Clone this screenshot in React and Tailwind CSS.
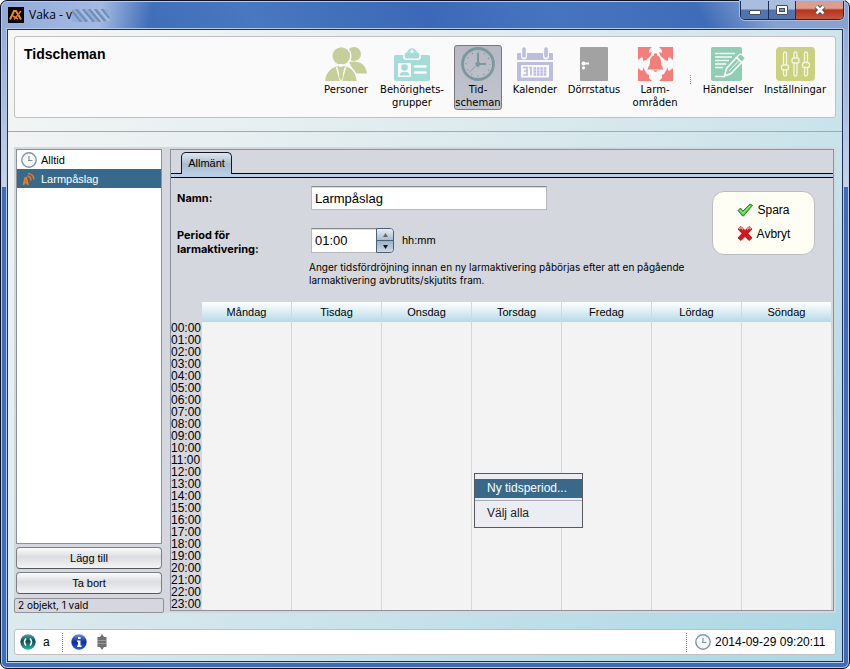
import React, { useState } from 'react';

const days = ['Måndag', 'Tisdag', 'Onsdag', 'Torsdag', 'Fredag', 'Lördag', 'Söndag'];
const hours = Array.from({ length: 24 }, (_, i) => `${String(i).padStart(2, '0')}:00`);

function PersonsIcon() {
  return (
    <svg width="42" height="34" viewBox="0 0 42 34" fill="#c6cf9a" className="shrink-0">
      <circle cx="29" cy="7" r="7" />
      <path d="M24 15C32 13 41 16 42 26.500H30Z" />
      <circle cx="16.300" cy="9" r="10.300" fill="#fafafa" />
      <circle cx="16.300" cy="9" r="8.800" />
      <path d="M-1 34C0 22 8 17 16 17C25 17 32 23 33.500 34Z" fill="#fafafa" />
      <path d="M0 34C1 25 7 20 14 19L16 21L18 19C26 20 31 25 31.500 34Z" />
      <path d="M11.500 20L15.500 34M20.500 20L16.500 34" stroke="#fafafa" strokeWidth="1.500" />
      <path d="M14 20H18L17 23L18 30L16 34L14 30L15 23Z" />
    </svg>
  );
}

function BadgeIcon() {
  return (
    <svg width="36" height="34" viewBox="0 0 36 34" fill="#a6dcd8" className="shrink-0">
      <rect y="8" width="36" height="26" rx="2" />
      <path d="M9 8V9Q9 13 12 13H24Q27 13 27 9V8Z" fill="#fafafa" />
      <path d="M10.500 8C11 5.500 13 5.500 13.500 4.500A4.700 4.700 0 0 1 22.500 4.500C23 5.500 25 5.500 25.500 8Q25.500 11.500 23 11.500H13Q10.500 11.500 10.500 8Z" />
      <circle cx="18" cy="4.500" r="1.700" fill="#fafafa" />
      <rect x="4" y="16" width="13" height="14" rx="1" fill="#fafafa" />
      <circle cx="10.500" cy="20.500" r="3.300" />
      <path d="M5.500 28.500C6 24.500 9 25 10.500 25S15 24.500 15.500 28.500Z" />
      <path d="M21 19.500H31.500M21 25.500H31.500" stroke="#fafafa" strokeWidth="2.600" strokeLinecap="round" />
    </svg>
  );
}

function BigClockIcon() {
  return (
    <svg width="34" height="34" viewBox="0 0 34 34" fill="none" stroke="#7d979f" className="shrink-0">
      <circle cx="17" cy="17" r="15.500" strokeWidth="2.800" />
      <circle cx="17" cy="17" r="12" strokeWidth="1.500" strokeDasharray="1 5.283" strokeDashoffset="0.500" />
      <path d="M17 17V6M17 17H25" strokeWidth="2" />
      <path d="M17 17L8 25.500" strokeWidth="0.800" />
      <path d="M17 13.500L20 17L17 20.500L14 17Z" fill="#7d979f" stroke="none" />
    </svg>
  );
}

function CalendarIcon() {
  return (
    <svg width="36" height="34" viewBox="0 0 36 34" fill="#bdbde0" className="shrink-0">
      <path d="M1 6H35Q36 6 36 7V13H0V7Q0 6 1 6Z" />
      <path d="M0 15H36V33Q36 34 35 34H1Q0 34 0 33Z" />
      <path d="M7 2V9.500M29 2V9.500" stroke="#fafafa" strokeWidth="6" strokeLinecap="round" />
      <path d="M7 2V9M29 2V9" stroke="#bdbde0" strokeWidth="3.600" strokeLinecap="round" />
      <rect x="4" y="18" width="28" height="12.500" fill="#fafafa" />
      <path d="M6 20.500H10V24H7M10 24V28H6M12 20.500H14V28.500" fill="none" stroke="#bdbde0" strokeWidth="1.700" />
      <path d="M16.500 21.500H29.500M16.500 24.500H29.500M16.500 27.500H29.500" stroke="#bdbde0" strokeWidth="2.300" strokeDasharray="2.600 0.800" />
    </svg>
  );
}

function DoorIcon() {
  return (
    <svg width="28" height="34" viewBox="0 0 28 34" className="shrink-0">
      <rect width="28" height="34" rx="1" fill="#a2a2a2" />
      <circle cx="3.500" cy="16.500" r="2" fill="#fff" />
      <rect x="3" y="15.500" width="6" height="2" fill="#fff" />
      <circle cx="3.500" cy="20.800" r="1.600" fill="#fff" />
    </svg>
  );
}

function AlarmIcon() {
  return (
    <svg width="35" height="34" viewBox="0 0 35 34" fill="#f57d7a" className="shrink-0">
      <path d="M0 0H14L11 3V6L14 5L12.500 9L8 13L5 14V10.500H3L0 13Z" />
      <path d="M35 0H21L24 3V6L21 5L22.500 9L27 13L30 14V10.500H32L35 13Z" />
      <path d="M0 34H14L11 31V28L14 29L9 27L6 22L5 20V23.500H3L0 21Z" />
      <path d="M35 34H21L24 31V28L21 29L26 27L29 22L30 20V23.500H32L35 21Z" />
      <circle cx="17.500" cy="8" r="1.800" />
      <path d="M17.500 8.500C22 8.500 23 12 23 15C23 19 25 20 25.500 22.500H9.500C10 20 12 19 12 15C12 12 13 8.500 17.500 8.500Z" />
      <path d="M15.500 23.300H19.500Q19 25 17.500 25T15.500 23.300Z" />
    </svg>
  );
}

function EventsIcon() {
  return (
    <svg width="34" height="34" viewBox="0 0 34 34" className="shrink-0">
      <rect width="31" height="34" rx="2" fill="#8fcdb5" />
      <path d="M4 6.500H24M4 10H21M4 13.500H18M4 17H15M4 20.500H12M4 29.500H14" stroke="#fafafa" strokeWidth="1.600" />
      <path d="M25.500 10.500L28.500 7.500Q30 6.500 31.500 8L33.500 10Q34.500 11.500 33.500 12.500L30.500 15.500Z" fill="#8fcdb5" stroke="#fafafa" strokeWidth="1.200" />
      <path d="M15.500 21.500L25.500 10.500L30.500 15.500L20 26.500L13.500 29Z" fill="#8fcdb5" stroke="#fafafa" strokeWidth="1.700" />
      <path d="M18 24L28 13.500" stroke="#fafafa" strokeWidth="1" />
    </svg>
  );
}

function SettingsIcon() {
  return (
    <svg width="39" height="34" viewBox="0 0 39 34" className="shrink-0">
      <rect width="39" height="34" rx="4" fill="#cad27f" />
      <g fill="#cad27f" stroke="#f4f6e2" strokeWidth="1.300">
        <rect x="7.500" y="5" width="3" height="24" rx="1.500" />
        <rect x="18" y="5" width="3" height="24" rx="1.500" />
        <rect x="28.500" y="5" width="3" height="24" rx="1.500" />
        <rect x="5.500" y="18" width="7" height="5" rx="2" />
        <rect x="16" y="11" width="7" height="5" rx="2" />
        <rect x="26.500" y="15.500" width="7" height="5" rx="2" />
      </g>
    </svg>
  );
}

function SmallClock() {
  return (
    <svg width="16" height="16" viewBox="0 0 16 16" fill="none" className="shrink-0">
      <circle cx="8" cy="8" r="7.200" fill="#fbfcfc" stroke="#8297a0" strokeWidth="1.400" />
      <circle cx="8" cy="8" r="5.300" stroke="#c3cfd4" strokeWidth="0.800" strokeDasharray="0.700 2.075" />
      <path d="M8 4V9M7 8.500H11.500" stroke="#8297a0" strokeWidth="1.200" />
    </svg>
  );
}

function SignalIcon() {
  return (
    <svg width="16" height="16" viewBox="0 0 16 16" fill="none" stroke="#ea7a1b" className="shrink-0">
      <path d="M2.500 14L4.200 7H5.300L7 14M3 11.500H6.500" strokeWidth="1.800" />
      <path d="M6.500 5Q10 5.500 10 9.500M7 2.500Q12.800 3 12.800 8.500" strokeWidth="1.500" />
    </svg>
  );
}

const tools = [
  { icon: PersonsIcon, lines: ['Personer'], width: 'w-12' },
  { icon: BadgeIcon, lines: ['Behörighets-', 'grupper'], width: 'w-[66px]' },
  { icon: BigClockIcon, lines: ['Tid-', 'scheman'], width: 'w-12', active: true },
  { icon: CalendarIcon, lines: ['Kalender'], width: 'w-12' },
  { icon: DoorIcon, lines: ['Dörrstatus'], width: 'w-[52px]' },
  { icon: AlarmIcon, lines: ['Larm-', 'områden'], width: 'w-[52px]' },
  null,
  { icon: EventsIcon, lines: ['Händelser'], width: 'w-[56px]' },
  { icon: SettingsIcon, lines: ['Inställningar'], width: 'w-[60px]' },
];

function ToolButton({ icon: Icon, lines, width, active }) {
  return (
    <button
      className={`${width} flex h-[65px] flex-col items-center rounded-[3px] border pt-px font-['DejaVu_Sans',sans-serif] text-[10px] leading-[13px] whitespace-nowrap ${
        active ? 'border-[#77797d] bg-linear-to-b from-[#b6b9c3] to-[#c3c5ce]' : 'border-transparent'
      }`}
    >
      <Icon />
      <span className="mt-[2px] flex flex-col items-center">
        {lines.map(l => <span key={l}>{l}</span>)}
      </span>
    </button>
  );
}

function TitleBar() {
  return (
    <header className="flex h-[27px] justify-between pl-[7px]">
      <div className="flex items-center gap-[5px] pt-px">
        <svg width="16" height="16" viewBox="0 0 16 16" fill="none">
          <rect width="16" height="16" fill="#000" />
          <path d="M2 12.500L6 4H8L13 12.500" stroke="#f58a1c" strokeWidth="2" />
          <path d="M13 4L6 12.500M5 9L10 12" stroke="#ee7711" strokeWidth="1.600" />
        </svg>
        <h1 className="flex items-center font-['Open_Sans',sans-serif] text-[12px] leading-4">
          <span>Vaka - v</span>
          <svg width="39" height="13" viewBox="0 0 39 13">
            <rect width="39" height="13" fill="#91add9" />
            <path d="M0 2L9 13M4 0L15 13M11 0L22 13M17 0L28 13M23 0L33 12M30 0L37 9" stroke="#5f779f" strokeWidth="2" opacity="0.600" />
            <path d="M8 0L19 13M20 0L31 13M27 0L37 12" stroke="#c5d3e8" strokeWidth="1.500" opacity="0.500" />
          </svg>
        </h1>
      </div>
      <div className="mr-[5px] flex h-[19px] overflow-hidden rounded-b-[5px] border border-t-0 border-[#1b2c55] shadow-[0_0_0_1px_#a9bde0]">
        <button aria-label="Minimera" className="flex w-7 items-center justify-center border-r border-[#1b2c55] bg-linear-to-b from-[#a9bddf] from-45% to-[#5273ab] to-50%">
          <span className="mt-[5px] h-[5px] w-3 rounded-[1px] border border-[#474d5d] bg-white" />
        </button>
        <button aria-label="Maximera" className="flex w-[27px] items-center justify-center border-r border-[#1b2c55] bg-linear-to-b from-[#a9bddf] from-45% to-[#5273ab] to-50%">
          <span className="flex h-[10px] w-3 items-center justify-center rounded-[1px] border border-[#474d5d] bg-white">
            <span className="h-1 w-[6px] border border-[#474d5d] bg-[#7b95c3]" />
          </span>
        </button>
        <button aria-label="Stäng" className="flex w-[47px] items-center justify-center bg-linear-to-b from-[#dc9d91] from-40% via-[#b5331c] via-50% to-[#c8553b]">
          <svg width="12" height="10" viewBox="0 0 12 10" fill="none">
            <path d="M2.500 1.500L9.500 8.500M9.500 1.500L2.500 8.500" stroke="#4c4a58" strokeWidth="4.500" />
            <path d="M2.500 1.500L9.500 8.500M9.500 1.500L2.500 8.500" stroke="#fff" strokeWidth="2.600" />
          </svg>
        </button>
      </div>
    </header>
  );
}

function Toolbar() {
  return (
    <div className="mx-[6px] mt-[6px] flex h-[82px] justify-between rounded-[3px] border border-[#c0bfc1] bg-[#fafafa] pr-[10px]">
      <h2 className="pt-[9px] pl-[9px] text-[14px] leading-4 font-bold">Tidscheman</h2>
      <nav className="flex gap-[9px] pt-2">
        {tools.map((tool, i) =>
          tool ? <ToolButton key={i} {...tool} /> : (
            <span key={i} className="mt-[30px] h-[9px] w-px border-l border-dotted border-[#8a8a8a]" />
          )
        )}
      </nav>
    </div>
  );
}

function Sidebar({ selected, onSelect }) {
  const items = [
    { name: 'Alltid', icon: SmallClock },
    { name: 'Larmpåslag', icon: SignalIcon },
  ];
  const btn = 'h-[22px] rounded-[4px] border border-[#7c7f85] border-b-[#55585e] bg-linear-to-b from-[#fbfbfc] via-[#dcdde0] via-45% to-[#f4f4f6] text-center leading-4';
  return (
    <aside className="flex w-[150px] shrink-0 flex-col text-[11px]">
      <ul className="mt-[2px] mr-[2px] ml-[2px] flex-1 border border-[#8d919b] bg-white">
        {items.map(({ name, icon: Icon }) => (
          <li key={name}>
            <button
              onClick={() => onSelect(name)}
              className={`flex h-[19px] w-full items-center gap-1 pt-px pl-1 ${selected === name ? 'bg-[#39698a] text-white' : ''}`}
            >
              <Icon />
              {name}
            </button>
          </li>
        ))}
      </ul>
      <div className="mt-[3px] mr-[2px] ml-[2px] flex flex-col gap-[3px]">
        <button className={btn}>Lägg till</button>
        <button className={btn}>Ta bort</button>
      </div>
      <p className="mt-1 h-[15px] rounded-[2px] border border-[#909298] pl-[3px] font-['Inter',sans-serif] text-[10px] leading-[13px]">2 objekt, 1 vald</p>
    </aside>
  );
}

function ScheduleForm() {
  const field = 'border border-[#b9b9bb] border-t-[#88898c] bg-white px-[3px] text-[13px] shadow-[inset_0_1px_0_#dcdcdc] outline-none';
  const label = "font-['Inter',sans-serif] text-[11px] leading-[14px] font-bold";
  return (
    <form className="flex h-[124px] justify-between pt-2 pr-[18px] pl-[6px]" onSubmit={e => e.preventDefault()}>
      <div className="grid grid-cols-[132px_1fr] content-start gap-y-[18px]">
        <label htmlFor="name" className={`${label} self-center`}>Namn:</label>
        <input id="name" defaultValue="Larmpåslag" className={`${field} ml-[2px] h-6 w-[236px]`} />
        <label htmlFor="period" className={label}>Period för<br />larmaktivering:</label>
        <div>
          <div className="ml-[2px] flex items-center">
            <input id="period" defaultValue="01:00" className={`${field} h-[25px] w-[65px] border-r-0`} />
            <div className="flex h-[25px] w-[18px] flex-col overflow-hidden rounded-r-[4px] border border-[#4b5f76]">
              <button aria-label="Öka" className="flex flex-1 items-center justify-center border-b border-[#4b5f76] bg-linear-to-b from-[#e8edf2] to-[#a7bccd]">
                <svg width="5" height="4" viewBox="0 0 5 4"><path d="M0 4H5L2.500 0Z" fill="#666" /></svg>
              </button>
              <button aria-label="Minska" className="flex flex-1 items-center justify-center bg-linear-to-b from-[#9db3c5] to-[#c9d9e6]">
                <svg width="5" height="4" viewBox="0 0 5 4"><path d="M0 0H5L2.500 4Z" fill="#111" /></svg>
              </button>
            </div>
            <span className="ml-2 text-[11px]">hh:mm</span>
          </div>
          <p className="mt-2 font-['Inter',sans-serif] text-[10px] leading-[13px] whitespace-nowrap">
            Anger tidsfördröjning innan en ny larmaktivering påbörjas efter att en pågående<br />
            larmaktivering avbrutits/skjutits fram.
          </p>
        </div>
      </div>
      <div className="mt-[5px] flex h-16 w-[103px] flex-col items-center justify-center gap-2 rounded-[12px] border border-[#bdbdbf] bg-[#fefef4] pb-[3px] text-[12px] leading-4">
        <button className="flex items-center gap-1">
          <svg width="16" height="14" viewBox="0 0 16 14">
            <path d="M1 7.500L3.500 5L6 8L13 1L15.500 2.500L6.500 13H5.500Z" fill="#4fc94a" stroke="#237a24" strokeWidth="0.900" />
            <path d="M3 7L6 10.500L13 3" fill="none" stroke="#a5f09c" strokeWidth="1" />
          </svg>
          Spara
        </button>
        <button className="flex items-center gap-1">
          <svg width="16" height="15" viewBox="0 0 16 15">
            <path d="M1 3L4 0.500L8 4.500L12 0.500L15 3L11 7.500L15 12L12 14.500L8 10.500L4 14.500L1 12L5 7.500Z" fill="#d9131a" stroke="#8f0d12" strokeWidth="0.700" />
            <path d="M2 3L4 1.500L6 3.500M14 3L12 1.500L10 3.500" stroke="#f6a3a5" strokeWidth="1.300" fill="none" />
          </svg>
          Avbryt
        </button>
      </div>
    </form>
  );
}

function ContextMenu() {
  return (
    <div role="menu" className="absolute top-[171px] left-[303px] w-[109px] border border-[#58595c] bg-[#ecedf2] pt-[5px] pb-1 text-[12px]">
      <button role="menuitem" className="block h-[19px] w-full bg-[#39698a] pl-3 text-left leading-[19px] text-white">Ny tidsperiod...</button>
      <hr className="mt-[2px] border-[#a6a8bb]" />
      <button role="menuitem" className="mt-[2px] block h-5 w-full pl-3 text-left leading-5 text-[#222]">Välj alla</button>
    </div>
  );
}

function Schedule() {
  return (
    <div className="relative pr-px">
      <table className="w-full table-fixed border-separate border-spacing-0">
        <thead>
          <tr className="h-5 text-[11px]">
            <th className="w-[31px] p-0" />
            {days.map(day => (
              <th key={day} className="border-r border-[#d5d7df] bg-linear-to-b from-white to-[#b5dbe7] p-0 font-normal">{day}</th>
            ))}
          </tr>
        </thead>
        <tbody>
          {hours.map(hour => (
            <tr key={hour} className="h-3">
              <th className="p-0 text-left text-[12px] leading-3 font-normal">{hour}</th>
              {days.map(day => <td key={day} className="border-r border-[#d5d7df] bg-[#f3f3f3] p-0" />)}
            </tr>
          ))}
        </tbody>
      </table>
      <ContextMenu />
    </div>
  );
}

function StatusBar() {
  const divider = 'h-[19px] w-px border-l border-dotted border-[#7d7f84]';
  return (
    <footer className="mx-[6px] mt-4 mb-[6px] flex h-[26px] items-center justify-between rounded-[3px] border border-[#c0bfc1] bg-white px-[5px]">
      <div className="flex items-center">
        <svg width="16" height="16" viewBox="0 0 16 16">
          <defs>
            <linearGradient id="teal" x1="0" y1="0" x2="0" y2="1">
              <stop offset="0" stopColor="#59a3a0" />
              <stop offset="0.450" stopColor="#0d4c50" />
              <stop offset="1" stopColor="#2fb5ad" />
            </linearGradient>
          </defs>
          <circle cx="8" cy="8" r="7.700" fill="url(#teal)" />
          <path d="M6 4.500Q3 8 6 11.500M10 4.500Q13 8 10 11.500" fill="none" stroke="#fff" strokeWidth="1.600" />
        </svg>
        <span className="ml-[7px] w-[19px] text-[12px]">a</span>
        <span className={divider} />
        <svg width="16" height="16" viewBox="0 0 16 16" className="ml-2">
          <defs>
            <linearGradient id="blue" x1="0" y1="0" x2="0" y2="1">
              <stop offset="0" stopColor="#6d8fe0" />
              <stop offset="0.500" stopColor="#0b2f9c" />
              <stop offset="1" stopColor="#2a62d8" />
            </linearGradient>
          </defs>
          <circle cx="8" cy="8" r="7.700" fill="url(#blue)" />
          <path d="M7 3H9.500V5H7ZM6 6.500H9.500V11.500H10.500V13H6V11.500H7V8H6Z" fill="#fff" />
        </svg>
        <svg width="10" height="16" viewBox="0 0 10 16" className="ml-[10px]">
          <path d="M5 0L7 3H9.500V13H7L5 16L3 13H0.500V3H3Z" fill="#6f6f6f" />
          <path d="M1 6.500H9M1 9.500H9" stroke="#999" />
        </svg>
      </div>
      <div className="flex items-center">
        <span className={divider} />
        <span className="mr-1 ml-2"><SmallClock /></span>
        <time className="min-w-[115px] text-[12px]">2014-09-29 09:20:11</time>
      </div>
    </footer>
  );
}

export default function App() {
  const [selected, setSelected] = useState('Larmpåslag');

  return (
    <div className="flex min-h-screen flex-col rounded-[7px] border border-[#0c1226] bg-[#3f6cb8] bg-[linear-gradient(100deg,#93abda,#a3b9e2_100px,transparent_150px),linear-gradient(60deg,#3f6cb8_15%,#4878bf_30%,#3b69b7_50%,#4675c0_65%,#3f6cb8_82%,#86a2d3_90%),linear-gradient(to_bottom,#8aa5d8,#c5d2ea)] bg-[length:100%_28px,100%_28px,100%_186px] bg-no-repeat font-['Liberation_Sans',Arial,sans-serif] text-black shadow-[inset_0_0_0_1px_#b9cbe8]">
      <TitleBar />
      <div className="mx-[5px] mb-[5px] flex flex-1 flex-col border border-[#b5cbe6] bg-[#1d2f5a] p-px">
        <div className="flex flex-1 flex-col bg-linear-135 from-[#f6f6f5] via-[#d5e7ec] to-[#a9d7e4]">
          <Toolbar />
          <hr className="mt-[13px] border-[#a3a9b2]" />
          <main className="mx-[6px] mt-[15px] flex flex-1 gap-[6px] bg-[#d5d7df] pr-[2px]">
            <Sidebar selected={selected} onSelect={setSelected} />
            <section className="mt-[2px] mb-[2px] flex min-w-0 flex-1 flex-col border border-[#8d919b]">
              <div className="flex h-[24px] items-end border-b border-black pt-[3px] pl-[10px]">
                <button className="-mb-px h-[22px] w-[51px] rounded-t-[5px] border border-b-0 border-[#101828] bg-linear-to-b from-[#dfe6ec] via-[#a9bdcf] via-55% to-[#b8cfe4] text-[11px]">Allmänt</button>
              </div>
              <div className="h-1 border-b border-black bg-[#b8cfe6]" />
              <ScheduleForm />
              <Schedule />
            </section>
          </main>
          <StatusBar />
        </div>
      </div>
    </div>
  );
}
